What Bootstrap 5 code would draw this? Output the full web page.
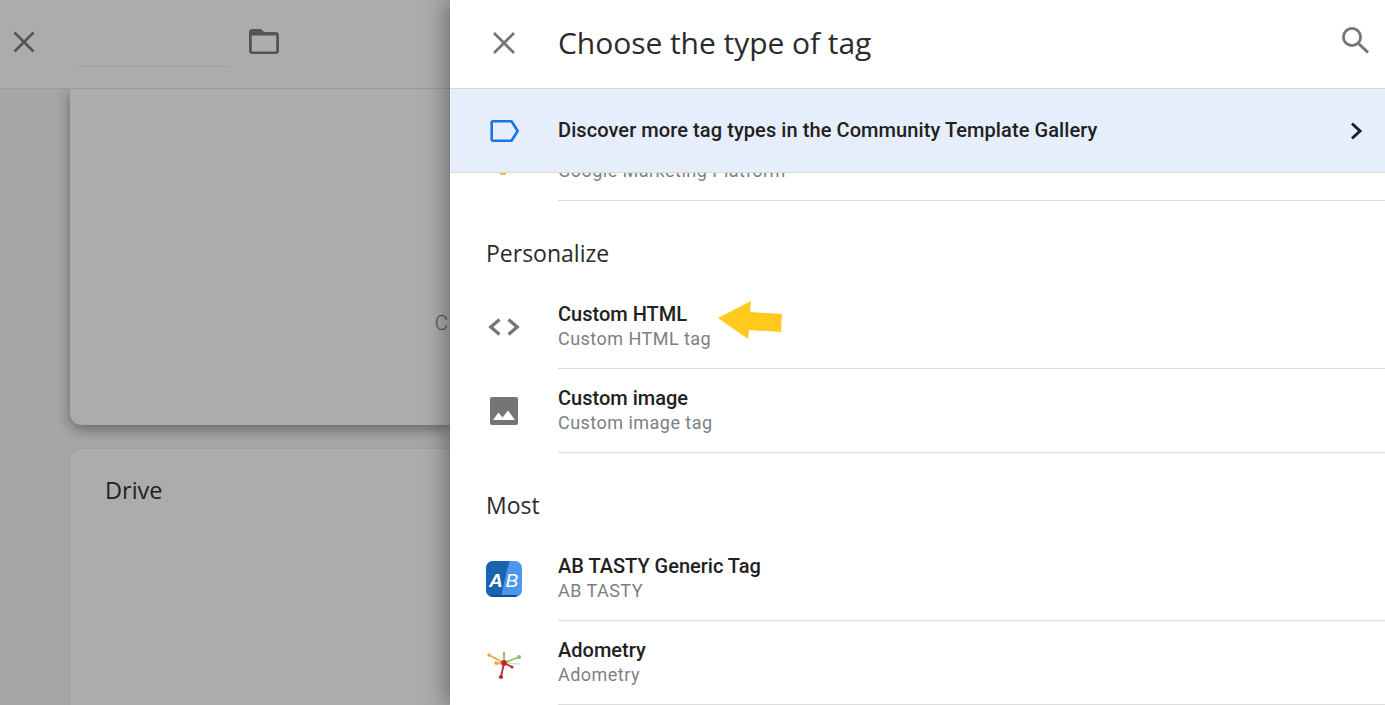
<!DOCTYPE html>
<html lang="en">
<head>
<meta charset="UTF-8">
<meta name="viewport" content="width=device-width, initial-scale=1.0">
<link href="https://cdn.jsdelivr.net/npm/bootstrap@5.3.3/dist/css/bootstrap.min.css" rel="stylesheet">
<script src="https://cdn.jsdelivr.net/npm/bootstrap@5.3.3/dist/js/bootstrap.bundle.min.js"></script>
<title>Choose the type of tag</title>
<style>
    html, body { height: 705px; overflow: hidden; }
    body { font-family: Roboto, "Liberation Sans", sans-serif; color: #212121; }
    .shell { height: 705px; }

    /* dimmed page behind the drawer */
    .back-pane { width: 450px; flex: none; background: #a5a7a7; }
    .back-head { height: 89px; background: #acacac; border-bottom: 1px solid #9b9b9b; padding-left: 12px; }
    .back-x { margin-top: 30px; }
    .back-name { width: 150px; height: 67px; margin-left: 42px; margin-right: 21px; border-bottom: 1px solid #9c9c9c; }
    .back-folder { margin-top: 29px; }
    .back-body { padding-left: 70px; overflow: hidden; flex: 1; min-height: 0; }
    .back-card-a { height: 336px; background: #acacac; border-radius: 0 0 0 12px; box-shadow: 0 4px 14px rgba(0,0,0,.4); padding-right: 2px; }
    .back-card-a span { font-size: 20.5px; font-weight: 300; line-height: 30px; color: #555; margin-top: 219px; }
    .back-card-b { height: 300px; margin-top: 23px; margin-left: -1px; background: #acacac; border: 1px solid #9f9f9f; border-right: 0; border-radius: 12px 0 0 0; padding: 26px 35px; }
    .back-card-b span { font: 23.5px/30px "Open Sans", sans-serif; color: #222; }

    /* drawer */
    .drawer { flex: 1; background: #fff; box-shadow: -4px 0 22px rgba(0,0,0,.38); z-index: 2; min-width: 0; }
    .drawer-head { height: 88px; flex: none; }
    .icon-slot { width: 108px; flex: none; padding-left: 36px; }
    .drawer-title { font: 400 30px/40px "Open Sans", sans-serif; letter-spacing: -.05px; color: #2b2b2b; margin: 0 0 3px; }
    .search-ico { margin-right: 14px; margin-top: -6px; }
    .promo { height: 85px; flex: none; background: #e7eefb; border-top: 1px solid #d8d8d8; border-bottom: 1px solid #d8d8d8; font-size: 20px; font-weight: 500; letter-spacing: .08px; color: #212121; }
    .promo-text { flex: 1; padding-bottom: 2px; }
    .promo-chevron { margin-right: 19px; }

    .tag-list { flex: 1; min-height: 0; overflow: hidden; }
    .clip-row { height: 28px; }
    .clip-dot { display: block; width: 6px; height: 2px; margin-left: 14px; background: #f5c04a; }
    .clip-text { flex: 1; border-bottom: 1px solid #dcdcdc; overflow: hidden; }
    .clip-text span { display: block; margin-top: -14px; }
    .sect-title { height: 84px; padding: 35px 0 0 36px; font: 400 23px/34px "Open Sans", sans-serif; color: #2b2b2b; }
    .tag-row { height: 84px; }
    .tag-text { flex: 1; height: 84px; border-bottom: 1px solid #dcdcdc; padding-top: 16px; }
    .tag-name { font-size: 20px; font-weight: 500; line-height: 26px; color: #212121; }
    .tag-sub, .clip-text span { font-size: 18px; line-height: 24px; color: #7b7f85; letter-spacing: .47px; }

    .yellow-arrow { position: absolute; left: 718px; top: 301px; z-index: 3; }
</style>
</head>
<body>
<div class="shell d-flex">
    <div class="back-pane d-flex flex-column">
        <div class="back-head d-flex align-items-start">
            <svg class="back-x" width="24" height="24" viewBox="0 0 24 24"><path d="M2.500 2.500 21.500 21.500M21.500 2.500 2.500 21.500" stroke="#555" stroke-width="2.600" fill="none"/></svg>
            <div class="back-name"></div>
            <svg class="back-folder" width="30" height="25" viewBox="0 0 30 25"><path d="M3 0h9l3 3h12c1.600 0 3 1.200 3 2.700v16.600c0 1.500-1.400 2.700-3 2.700H3c-1.600 0-3-1.200-3-2.700V2.700C0 1.200 1.400 0 3 0zM2.800 6.500v16h24.400v-16z" fill="#555" fill-rule="evenodd"/></svg>
        </div>
        <div class="back-body">
            <div class="back-card-a d-flex justify-content-end align-items-start"><span>C</span></div>
            <div class="back-card-b"><span>Drive</span></div>
        </div>
    </div>

    <div class="drawer d-flex flex-column">
        <div class="drawer-head d-flex align-items-center">
            <div class="icon-slot">
                <svg class="d-block" width="36" height="36" viewBox="0 0 36 36"><path d="M8 7 28 27M28 7 8 27" stroke="#757575" stroke-width="2.700" fill="none"/></svg>
            </div>
            <h1 class="drawer-title flex-grow-1">Choose the type of tag</h1>
            <svg class="search-ico" width="30" height="30" viewBox="0 0 30 30"><circle cx="11" cy="11" r="8.600" stroke="#757575" stroke-width="2.800" fill="none"/><path d="M17.500 17.500 27 26.500" stroke="#757575" stroke-width="3" fill="none"/></svg>
        </div>

        <div class="promo d-flex align-items-center">
            <div class="icon-slot">
                <svg class="d-block" width="36" height="28" viewBox="0 0 36 28"><path d="M7 4.200h18.500l6.200 9.800-6.200 9.800H7a1.300 1.300 0 0 1-1.300-1.300V5.500A1.300 1.300 0 0 1 7 4.200z" stroke="#1a73e8" stroke-width="2.600" fill="none" stroke-linejoin="round"/></svg>
            </div>
            <div class="promo-text">Discover more tag types in the Community Template Gallery</div>
            <svg class="promo-chevron" width="20" height="24" viewBox="0 0 20 24"><path d="M6 4.500 14 12l-8 7.500" stroke="#212121" stroke-width="3" fill="none"/></svg>
        </div>

        <div class="tag-list">
            <div class="clip-row d-flex">
                <div class="icon-slot"><span class="clip-dot"></span></div>
                <div class="clip-text"><span>Google Marketing Platform</span></div>
            </div>
            <div class="sect-title">Personalize</div>

            <div class="tag-row d-flex">
                <div class="icon-slot d-flex align-items-center">
                    <svg width="36" height="36" viewBox="0 0 36 36"><path d="M13.500 10.500 4.800 18l8.700 7.500M22.500 10.500l8.700 7.500-8.700 7.500" stroke="#757575" stroke-width="3.300" fill="none"/></svg>
                </div>
                <div class="tag-text">
                    <div class="tag-name">Custom HTML</div>
                    <div class="tag-sub">Custom HTML tag</div>
                </div>
            </div>
            <div class="tag-row d-flex">
                <div class="icon-slot d-flex align-items-center">
                    <svg width="36" height="36" viewBox="0 0 36 36"><path d="M6 4h24a2 2 0 0 1 2 2v24a2 2 0 0 1-2 2H6a2 2 0 0 1-2-2V6a2 2 0 0 1 2-2zm1 23h22l-7-9.500-5.500 7-4-5z" fill="#757575" fill-rule="evenodd"/></svg>
                </div>
                <div class="tag-text">
                    <div class="tag-name">Custom image</div>
                    <div class="tag-sub">Custom image tag</div>
                </div>
            </div>

            <div class="sect-title">Most</div>

            <div class="tag-row d-flex">
                <div class="icon-slot d-flex align-items-center">
                    <svg width="36" height="36" viewBox="0 0 36 36"><rect width="36" height="36" rx="7" fill="#4c97ee"/><path d="M7 0h17C20 10 18 24 15 36H7a7 7 0 0 1-7-7V7a7 7 0 0 1 7-7z" fill="#1a63ae"/><path d="M4 34h28a5 5 0 0 1-3 2H7a5 5 0 0 1-3-2z" fill="#124f92"/><text x="3" y="26" font-family="Liberation Sans, sans-serif" font-style="italic" font-weight="700" font-size="19" fill="#fff">A</text><text x="19.500" y="26" font-family="Liberation Sans, sans-serif" font-style="italic" font-size="19" fill="#fff">B</text></svg>
                </div>
                <div class="tag-text">
                    <div class="tag-name">AB TASTY Generic Tag</div>
                    <div class="tag-sub">AB TASTY</div>
                </div>
            </div>
            <div class="tag-row d-flex">
                <div class="icon-slot d-flex align-items-center">
                    <svg width="36" height="36" viewBox="0 0 36 36">
                        <path d="M18 18 34 19M18 18 10 20" stroke="#dcdcdc" stroke-width="1.500"/>
                        <path d="M3 10 18 18M10 18h8" stroke="#e3a83a" stroke-width="1.700"/>
                        <path d="M18 18 33 12M18 8v10" stroke="#92bd63" stroke-width="1.700"/>
                        <path d="M18 18 26 22M18 18 15 32" stroke="#c0282d" stroke-width="1.800"/>
                        <circle cx="3" cy="10" r="1.700" fill="#e3a83a"/><circle cx="10" cy="18" r="1.800" fill="#e3a83a"/>
                        <circle cx="33" cy="12" r="2" fill="#92bd63"/><circle cx="18" cy="8" r="1.200" fill="#92bd63"/>
                        <circle cx="18" cy="18" r="2.900" fill="#c0282d"/><circle cx="26" cy="22" r="1.600" fill="#c0282d"/><circle cx="15" cy="32" r="2.100" fill="#c0282d"/>
                    </svg>
                </div>
                <div class="tag-text">
                    <div class="tag-name">Adometry</div>
                    <div class="tag-sub">Adometry</div>
                </div>
            </div>
        </div>
    </div>
</div>

<svg class="yellow-arrow" width="65" height="38" viewBox="0 0 65 38"><path d="M0 17 33 0l-1 11 32 2-1 18-32-2-1 9z" fill="#ffca1c"/></svg>
</body>
</html>
